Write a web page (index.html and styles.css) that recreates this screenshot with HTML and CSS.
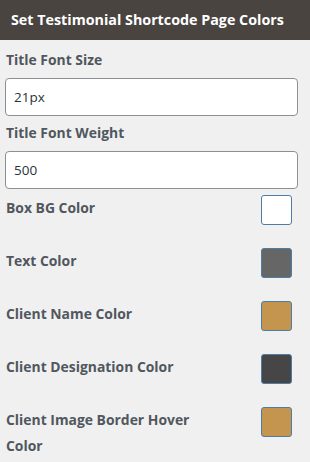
FILE: index.html
```html
<!DOCTYPE html>
<html>
<head>
<meta charset="utf-8">
<link rel="stylesheet" href="styles.css">
</head>
<body>
<div class="panel">
  <div class="head">Set Testimonial Shortcode Page Colors</div>
  <div class="body">
    <div class="field">
      <label class="lbl">Title Font Size</label>
      <input class="inp" type="text" value="21px">
    </div>
    <div class="field">
      <label class="lbl">Title Font Weight</label>
      <input class="inp" type="text" value="500">
    </div>
    <div class="rows">
      <div class="row"><span class="lbl">Box BG Color</span><span class="sw" style="background:#ffffff"></span></div>
      <div class="row"><span class="lbl">Text Color</span><span class="sw" style="background:#666666"></span></div>
      <div class="row"><span class="lbl">Client Name Color</span><span class="sw" style="background:#c4954f"></span></div>
      <div class="row"><span class="lbl">Client Designation Color</span><span class="sw" style="background:#464646"></span></div>
      <div class="row"><span class="lbl two">Client Image Border Hover Color</span><span class="sw" style="background:#c4954f"></span></div>
    </div>
  </div>
</div>
</body>
</html>
```

FILE: styles.css
```css
html, body { margin: 0; padding: 0; }
body {
  background: #f0f0f0;
  font-family: "Open Sans", "Noto Sans", sans-serif;
  width: 310px;
  height: 462px;
  overflow: hidden;
}
.head {
  background: #494440;
  color: #ffffff;
  height: 40px;
  box-sizing: border-box;
  padding: 10px 0 0 11px;
  font-size: 14.3px;
  font-weight: 700;
  line-height: 20px;
}
.body {
  padding: 7px 12px 0 5px;
}
.field { display: flex; flex-direction: column; }
.lbl {
  color: #50575e;
  font-size: 13.9px;
  font-weight: 700;
  line-height: 26px;
}
.field .lbl { padding-left: 1px; margin-bottom: 5px; }
.inp {
  box-sizing: border-box;
  width: 293px;
  height: 38px;
  border: 1px solid #8c8f94;
  border-radius: 4px;
  background: #fff;
  padding: 0 8px;
  font-family: "Open Sans", "Noto Sans", sans-serif;
  font-size: 13.5px;
  color: #2c3338;
  margin-bottom: 4px;
  outline: none;
}
.field:nth-child(2) .inp { margin-bottom: 6px; }
.rows { padding-right: 6px; }
.row {
  display: flex;
  justify-content: space-between;
  align-items: flex-start;
  padding-left: 1px;
  height: 53px;
}
.two { max-width: 210px; }
.sw {
  box-sizing: border-box;
  flex: none;
  width: 31px;
  height: 30px;
  border: 1px solid #4f7ca4;
  border-radius: 3px;
}
```
